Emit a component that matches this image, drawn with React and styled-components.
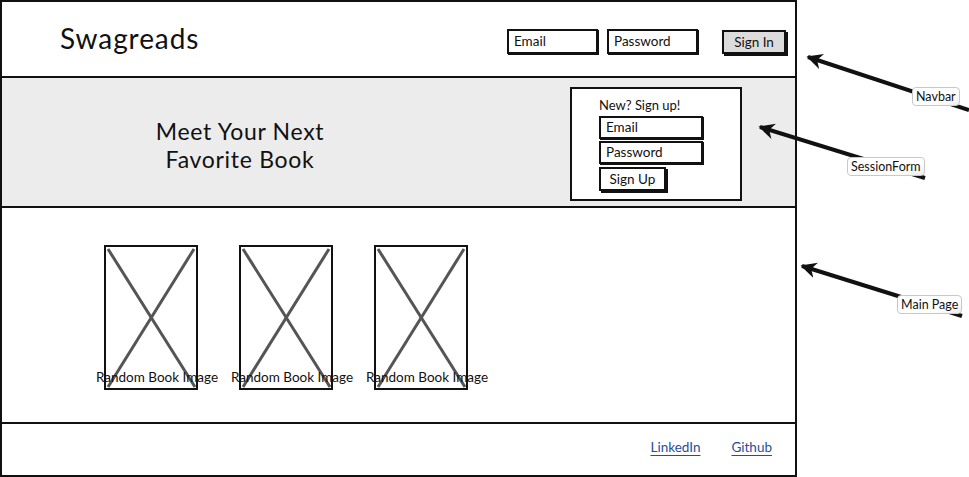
import React from 'react';
import styled, { createGlobalStyle } from 'styled-components';

const ink = '#111';

const GlobalStyle = createGlobalStyle`
    *, *::before, *::after {
        box-sizing: border-box;
    }
    body {
        margin: 0;
        background: #fff;
        font-family: Lato, "Noto Sans", sans-serif;
        color: ${ink};
    }
`

const Canvas = styled.div`
    position: relative;
    width: 969px;
    height: 477px;
    overflow: hidden;
    background: #fff;
`

const Frame = styled.div`
    width: 797px;
    height: 477px;
    border: 2px solid ${ink};
    display: flex;
    flex-direction: column;
`

const Navbar = styled.header`
    height: 76px;
    flex: none;
    border-bottom: 2px solid ${ink};
    display: flex;
    align-items: center;
    justify-content: space-between;
    padding: 0 9px 0 58px;
`

const Logo = styled.h1`
    margin: 0 0 2px;
    font-size: 28px;
    font-weight: 400;
    letter-spacing: 0.9px;
`

const NavForm = styled.div`
    display: flex;
    align-items: center;
    margin-top: 5px;
`

const Input = styled.div`
    width: ${p => p.$w}px;
    height: ${p => p.$h || 25}px;
    margin-right: ${p => p.$gap || 0}px;
    border: 2px solid ${ink};
    box-shadow: 1px 1px 0 ${ink};
    background: #fff;
    font-size: 13.5px;
    line-height: ${p => (p.$h || 25) - 5}px;
    padding-left: 5px;
`

const Button = styled.div`
    width: ${p => p.$w}px;
    height: 24px;
    margin-top: ${p => p.$top || 0}px;
    border: 2px solid ${ink};
    box-shadow: 2px 2px 0 ${ink};
    background: ${p => (p.$grey ? '#dcdcdc' : '#fff')};
    font-size: 13.5px;
    line-height: 20px;
    text-align: center;
`

const Hero = styled.section`
    height: 130px;
    flex: none;
    border-bottom: 2px solid ${ink};
    background: #ececec;
    display: flex;
    align-items: flex-start;
`

const Tagline = styled.h2`
    width: 476px;
    margin: 0;
    padding-top: 39px;
    text-align: center;
    font-size: 23px;
    font-weight: 400;
    line-height: 28px;
    letter-spacing: 0.7px;
`

const SessionBox = styled.div`
    width: 172px;
    height: 114px;
    margin: 9px 0 0 92px;
    border: 2px solid ${ink};
    background: #fff;
    padding: 9px 0 0 27px;
    display: flex;
    flex-direction: column;
    gap: 2px;
`

const Prompt = styled.div`
    font-size: 13px;
    line-height: 15px;
    margin-bottom: 1px;
`

const Main = styled.main`
    height: 216px;
    flex: none;
    border-bottom: 2px solid ${ink};
    display: flex;
    align-items: flex-start;
    gap: 41px;
    padding: 37px 0 0 102px;
`

const Book = styled.div`
    position: relative;
    width: 94px;
    height: 145px;
`

const Caption = styled.span`
    position: absolute;
    left: 50%;
    bottom: 5px;
    transform: translateX(calc(-50% + 6px));
    white-space: nowrap;
    font-size: 13.5px;
`

const Footer = styled.footer`
    flex: 1;
    display: flex;
    align-items: center;
    justify-content: flex-end;
    gap: 31px;
    padding: 0 23px 5px 0;
`

const Link = styled.a`
    color: #1d4f9c;
    font-size: 13.5px;
    text-decoration: underline;
    text-underline-offset: 3px;
`

const Overlay = styled.svg`
    position: absolute;
    top: 0;
    left: 0;
    pointer-events: none;
`

const Note = styled.div`
    position: absolute;
    left: ${p => p.$x}px;
    top: ${p => p.$y}px;
    height: 19px;
    padding: 0 3px;
    border: 1px solid #c8c8c8;
    border-radius: 4px;
    background: linear-gradient(160deg, #fff 70%, #ececec);
    font-size: 12.5px;
    line-height: 17px;
`

const BookImage = ({ caption }) => (
    <Book>
        <svg width="94" height="145" viewBox="0 0 94 145">
            <line x1="4" y1="4" x2="91" y2="142" stroke="#555" strokeWidth="3" />
            <line x1="90" y1="4" x2="4" y2="142" stroke="#555" strokeWidth="3" />
            <rect x="1" y="1" width="92" height="143" fill="none" stroke={ink} strokeWidth="2" />
        </svg>
        <Caption>{caption}</Caption>
    </Book>
)

const arrows = [
    [808, 57, 969, 110],
    [760, 127, 925, 178],
    [802, 266, 962, 316],
]

const App = () => {
    const books = ['Random Book Image', 'Random Book Image', 'Random Book Image'];

    return (
        <>
            <GlobalStyle />
            <Canvas>
                <Frame>
                    <Navbar>
                        <Logo>Swagreads</Logo>
                        <NavForm>
                            <Input $w={91} $gap={9}>Email</Input>
                            <Input $w={91} $gap={24}>Password</Input>
                            <Button $w={64} $grey>Sign In</Button>
                        </NavForm>
                    </Navbar>
                    <Hero>
                        <Tagline>Meet Your Next<br />Favorite Book</Tagline>
                        <SessionBox>
                            <Prompt>New? Sign up!</Prompt>
                            <Input $w={104} $h={23}>Email</Input>
                            <Input $w={104} $h={23}>Password</Input>
                            <Button $w={67} $top={1}>Sign Up</Button>
                        </SessionBox>
                    </Hero>
                    <Main>
                        {books.map((b, i) => <BookImage key={i} caption={b} />)}
                    </Main>
                    <Footer>
                        <Link href="#">LinkedIn</Link>
                        <Link href="#">Github</Link>
                    </Footer>
                </Frame>
                <Overlay width="969" height="477" viewBox="0 0 969 477">
                    <defs>
                        <marker id="head" viewBox="0 0 10 10" refX="9" refY="5" markerWidth="4" markerHeight="4" orient="auto-start-reverse">
                            <path d="M0 0 L10 5 L0 10 L3 5 Z" fill={ink} />
                        </marker>
                    </defs>
                    {arrows.map(([x1, y1, x2, y2], i) => (
                        <line key={i} x1={x1} y1={y1} x2={x2} y2={y2} stroke={ink} strokeWidth="4" markerStart="url(#head)" />
                    ))}
                </Overlay>
                <Note $x={912} $y={87}>Navbar</Note>
                <Note $x={847} $y={157}>SessionForm</Note>
                <Note $x={897} $y={295}>Main Page</Note>
            </Canvas>
        </>
    )
}

export default App
